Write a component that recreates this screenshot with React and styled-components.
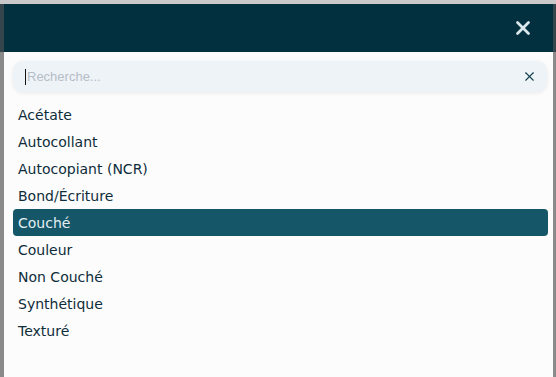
import React from "react";
import styled, { createGlobalStyle } from "styled-components";
import { X } from "lucide-react";

const options = [
  "Acétate",
  "Autocollant",
  "Autocopiant (NCR)",
  "Bond/Écriture",
  "Couché",
  "Couleur",
  "Non Couché",
  "Synthétique",
  "Texturé",
];

export default function App() {
  return (
    <>
      <GlobalStyle />
      <Backdrop>
        <Modal>
          <Header>
            <CloseButton aria-label="Fermer">
              <X size={22} strokeWidth={3} />
            </CloseButton>
          </Header>
          <Body>
            <SearchBox>
              <Caret />
              <SearchInput placeholder="Recherche..." />
              <ClearButton aria-label="Effacer">
                <X size={15} strokeWidth={1.8} />
              </ClearButton>
            </SearchBox>
            <List>
              {options.map((label) => (
                <Option key={label} selected={label === "Couché"}>
                  {label}
                </Option>
              ))}
            </List>
          </Body>
        </Modal>
      </Backdrop>
    </>
  );
}

const GlobalStyle = createGlobalStyle`
  html, body {
    margin: 0;
    padding: 0;
    height: 100%;
    overflow: hidden;
  }
  #root {
    height: 100%;
  }
`;

const Backdrop = styled.div`
  height: 377px;
  box-sizing: border-box;
  padding: 4px 3px 0 4px;
  background: linear-gradient(
    to bottom,
    #c9c9c9 0,
    #c9c9c9 4px,
    #34464c 4px,
    #34464c 52px,
    #8a8a8a 52px
  );
`;

const Modal = styled.div`
  height: 100%;
  display: flex;
  flex-direction: column;
  background: #fcfcfc;
`;

const Header = styled.div`
  height: 48px;
  flex-shrink: 0;
  background: #03303f;
  display: flex;
  align-items: center;
  justify-content: flex-end;
  padding-right: 19px;
`;

const CloseButton = styled.button`
  border: none;
  background: none;
  padding: 0;
  color: #dbe8ec;
  display: flex;
  cursor: pointer;
`;

const Body = styled.div`
  padding: 9px 5px 0 9px;
  display: flex;
  flex-direction: column;
`;

const SearchBox = styled.div`
  height: 31px;
  margin-right: 1px;
  display: flex;
  align-items: center;
  padding: 0 10px 0 12px;
  background: #eef3f7;
  border-radius: 10px;
  box-shadow: 0 1px 4px rgba(0, 0, 0, 0.08);
`;

const Caret = styled.span`
  width: 1px;
  height: 16px;
  background: #111;
  margin-right: 1px;
`;

const SearchInput = styled.input`
  flex: 1;
  border: none;
  outline: none;
  background: transparent;
  padding: 0;
  font-family: "Liberation Sans", Arial, sans-serif;
  font-size: 13px;
  color: #222;
  &::placeholder {
    color: #b5bdc7;
  }
`;

const ClearButton = styled.button`
  border: none;
  background: none;
  padding: 0;
  color: #12404e;
  display: flex;
`;

const List = styled.ul`
  list-style: none;
  margin: 9px 0 0;
  padding: 0;
  display: flex;
  flex-direction: column;
`;

const Option = styled.li`
  height: 27px;
  display: flex;
  align-items: center;
  padding: 1px 0 0 5px;
  box-sizing: border-box;
  border-radius: 4px;
  font-family: "DejaVu Sans", Verdana, sans-serif;
  font-size: 14px;
  color: ${(p) => (p.selected ? "#e3eff3" : "#0e2c3a")};
  background: ${(p) => (p.selected ? "#155669" : "transparent")};
`;
